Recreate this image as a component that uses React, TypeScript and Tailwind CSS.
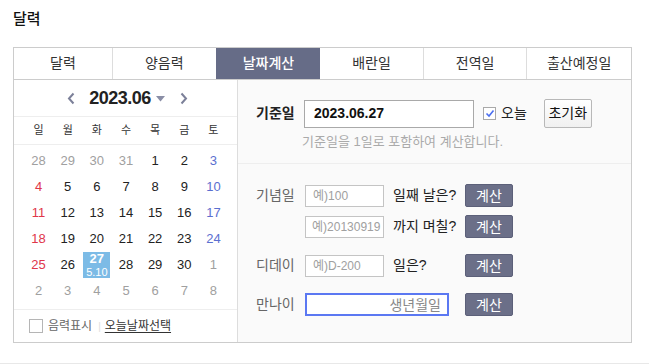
import React from 'react';

const TABS = ['달력', '양음력', '날짜계산', '배란일', '전역일', '출산예정일'];
const WEEK = ['일', '월', '화', '수', '목', '금', '토'];

// [day, kind] kind: o = other month, t = today
const DAYS: [string, string][] = [
  ['28', 'o'], ['29', 'o'], ['30', 'o'], ['31', 'o'], ['1', ''], ['2', ''], ['3', ''],
  ['4', ''], ['5', ''], ['6', ''], ['7', ''], ['8', ''], ['9', ''], ['10', ''],
  ['11', ''], ['12', ''], ['13', ''], ['14', ''], ['15', ''], ['16', ''], ['17', ''],
  ['18', ''], ['19', ''], ['20', ''], ['21', ''], ['22', ''], ['23', ''], ['24', ''],
  ['25', ''], ['26', ''], ['27', 't'], ['28', ''], ['29', ''], ['30', ''], ['1', 'o'],
  ['2', 'o'], ['3', 'o'], ['4', 'o'], ['5', 'o'], ['6', 'o'], ['7', 'o'], ['8', 'o'],
];

const dayColor = (i: number, kind: string) => {
  if (kind === 'o') return 'text-[#a0a0a0]';
  const col = i % 7;
  if (col === 0) return 'text-[#e0364a]';
  if (col === 6) return 'text-[#5b6fd0]';
  return 'text-[#222]';
};

const CalcButton = () => (
  <button className="w-[48px] h-[23px] rounded-[2px] border border-[#5c6079] bg-[#6b6f88] text-white text-[14px] leading-none">
    계산
  </button>
);

const Chevron = ({ dir }: { dir: 'l' | 'r' }) => (
  <svg width="8" height="13" viewBox="0 0 8 13" className="text-[#7c8099]">
    <path
      d={dir === 'l' ? 'M6.5 1.5 L2 6.5 L6.5 11.5' : 'M1.5 1.5 L6 6.5 L1.5 11.5'}
      fill="none"
      stroke="currentColor"
      strokeWidth="2"
    />
  </svg>
);

const App = () => {
  return (
    <div className="w-[649px] h-[364px] overflow-hidden bg-white font-['Liberation_Sans','Noto_Sans_CJK_KR',sans-serif] text-[#222]">
      <div className="pl-[13px]">
        <h1 className="h-[47px] pt-[9px] text-[15px] leading-[20px] font-medium text-[#111]">달력</h1>

        <div className="w-[619px] border border-[#cccccc]">
          {/* tabs */}
          <div className="grid grid-cols-[99px_repeat(5,1fr)] h-[32px] border-b border-[#cccccc]">
            {TABS.map((t, i) => (
              <div
                key={t}
                className={`flex items-center justify-center text-[14px] ${
                  i === 2
                    ? 'bg-[#666c87] text-white font-medium'
                    : 'text-[#333]'
                } ${i < TABS.length - 1 && i !== 1 && i !== 2 ? 'border-r border-[#dddddd]' : ''} ${i === 1 ? 'border-r border-[#666c87]' : ''}`}
              >
                {t}
              </div>
            ))}
          </div>

          <div className="flex h-[262px]">
            {/* calendar */}
            <div className="w-[224px] border-r border-[#dddddd] flex flex-col">
              <div className="h-[37px] border-b border-[#eeeeee] flex items-center justify-center">
                <span className="ml-[4px]">
                  <Chevron dir="l" />
                </span>
                <span className="ml-[14px] text-[18px] font-bold tracking-[-0.5px] text-[#222]">2023.06</span>
                <svg width="9" height="6" viewBox="0 0 9 6" className="ml-[5px] mt-[2px]">
                  <path d="M0 0 H9 L4.5 5.5 Z" fill="#8a8ea6" />
                </svg>
                <span className="ml-[15px]">
                  <Chevron dir="r" />
                </span>
              </div>
              <div className="h-[28px] border-b border-[#eeeeee] pl-[10px]">
                <div className="grid grid-cols-7 w-[204px] h-full items-center">
                  {WEEK.map(w => (
                    <span key={w} className="text-center text-[11px] text-[#333]">{w}</span>
                  ))}
                </div>
              </div>
              <div className="pl-[10px] pt-[3px] pb-[5px] border-b border-[#eeeeee]">
                <div className="grid grid-cols-7 w-[204px]">
                  {DAYS.map(([d, kind], i) => (
                    <div key={i} className="h-[26px] flex items-center justify-center">
                      {kind === 't' ? (
                        <div className="w-[27px] h-[26px] bg-[#7cbbe6] flex flex-col items-center justify-center text-white">
                          <span className="text-[13px] font-bold leading-[12px]">{d}</span>
                          <span className="text-[11px] leading-[12px] mt-[1px]">5.10</span>
                        </div>
                      ) : (
                        <span className={`text-[13px] ${dayColor(i, kind)}`}>{d}</span>
                      )}
                    </div>
                  ))}
                </div>
              </div>
              <div className="flex-1 flex items-center pl-[15px] text-[12px]">
                <span className="w-[14px] h-[14px] border border-[#b5b5b5] bg-white" />
                <span className="ml-[5px] text-[#666]">음력표시</span>
                <span className="ml-[6px] text-[#ddd] text-[10px]">|</span>
                <span className="ml-[4px] text-[#333] underline underline-offset-2">오늘날짜선택</span>
              </div>
            </div>

            {/* date calculation */}
            <div className="flex-1 bg-[#fafafa]">
              <div className="pl-[18px] pt-[19px] pb-[13px] border-b border-[#eeeeee]">
                <div className="flex items-center h-[29px]">
                  <span className="w-[48px] text-[14px] font-bold text-[#222]">기준일</span>
                  <div className="w-[170px] h-[28px] border border-[#a9a9a9] bg-white flex items-center pl-[9px] text-[14px] font-bold text-[#111]">
                    2023.06.27
                  </div>
                  <span className="ml-[9px] w-[13px] h-[13px] border border-[#a9a9a9] bg-white flex items-center justify-center">
                    <svg width="10" height="9" viewBox="0 0 10 9">
                      <path d="M1.5 4.5 L4 7 L8.5 1.5" fill="none" stroke="#4b6ef0" strokeWidth="1.6" />
                    </svg>
                  </span>
                  <span className="ml-[5px] text-[14px] text-[#222]">오늘</span>
                  <button className="ml-[17px] w-[48px] h-[29px] border border-[#b8b8b8] rounded-[2px] bg-gradient-to-b from-white to-[#f0f0f0] text-[14px] text-[#111]">
                    초기화
                  </button>
                </div>
                <div className="ml-[46px] mt-[5px] text-[13px] leading-[17px] text-[#aaaaaa]">
                  기준일을 1일로 포함하여 계산합니다.
                </div>
              </div>

              <div className="pl-[18px] pt-[20px]">
                <div className="flex items-center h-[23px]">
                  <span className="w-[49px] text-[14px] text-[#666]">기념일</span>
                  <input
                    placeholder="예)100"
                    className="w-[79px] h-[22px] border border-[#c4c4c4] bg-white pl-[7px] text-[12px] placeholder:text-[#a0a0a0] outline-none"
                  />
                  <span className="ml-[9px] w-[72px] text-[14px] text-[#222]">일째 날은?</span>
                  <CalcButton />
                </div>
                <div className="flex items-center h-[23px] mt-[8px]">
                  <span className="w-[49px]" />
                  <input
                    placeholder="예)20130919"
                    className="w-[79px] h-[22px] border border-[#c4c4c4] bg-white pl-[6px] text-[12px] placeholder:text-[#a0a0a0] outline-none"
                  />
                  <span className="ml-[9px] w-[72px] text-[14px] text-[#222]">까지 며칠?</span>
                  <CalcButton />
                </div>
                <div className="flex items-center h-[23px] mt-[16px]">
                  <span className="w-[49px] text-[14px] text-[#666]">디데이</span>
                  <input
                    placeholder="예)D-200"
                    className="w-[79px] h-[22px] border border-[#c4c4c4] bg-white pl-[7px] text-[12px] placeholder:text-[#a0a0a0] outline-none"
                  />
                  <span className="ml-[9px] w-[72px] text-[14px] text-[#222]">일은?</span>
                  <CalcButton />
                </div>
                <div className="flex items-center h-[23px] mt-[16px]">
                  <span className="w-[49px] text-[14px] text-[#666]">만나이</span>
                  <input
                    placeholder="생년월일"
                    className="w-[144px] h-[23px] border-2 border-[#5b78f2] bg-white pr-[6px] text-right text-[14px] placeholder:text-[#888] outline-none"
                  />
                  <span className="ml-[16px]">
                    <CalcButton />
                  </span>
                </div>
              </div>
            </div>
          </div>
        </div>
      </div>
      <div className="mt-[20px] border-t border-[#e8e8e8]" />
    </div>
  );
};

export default App;
